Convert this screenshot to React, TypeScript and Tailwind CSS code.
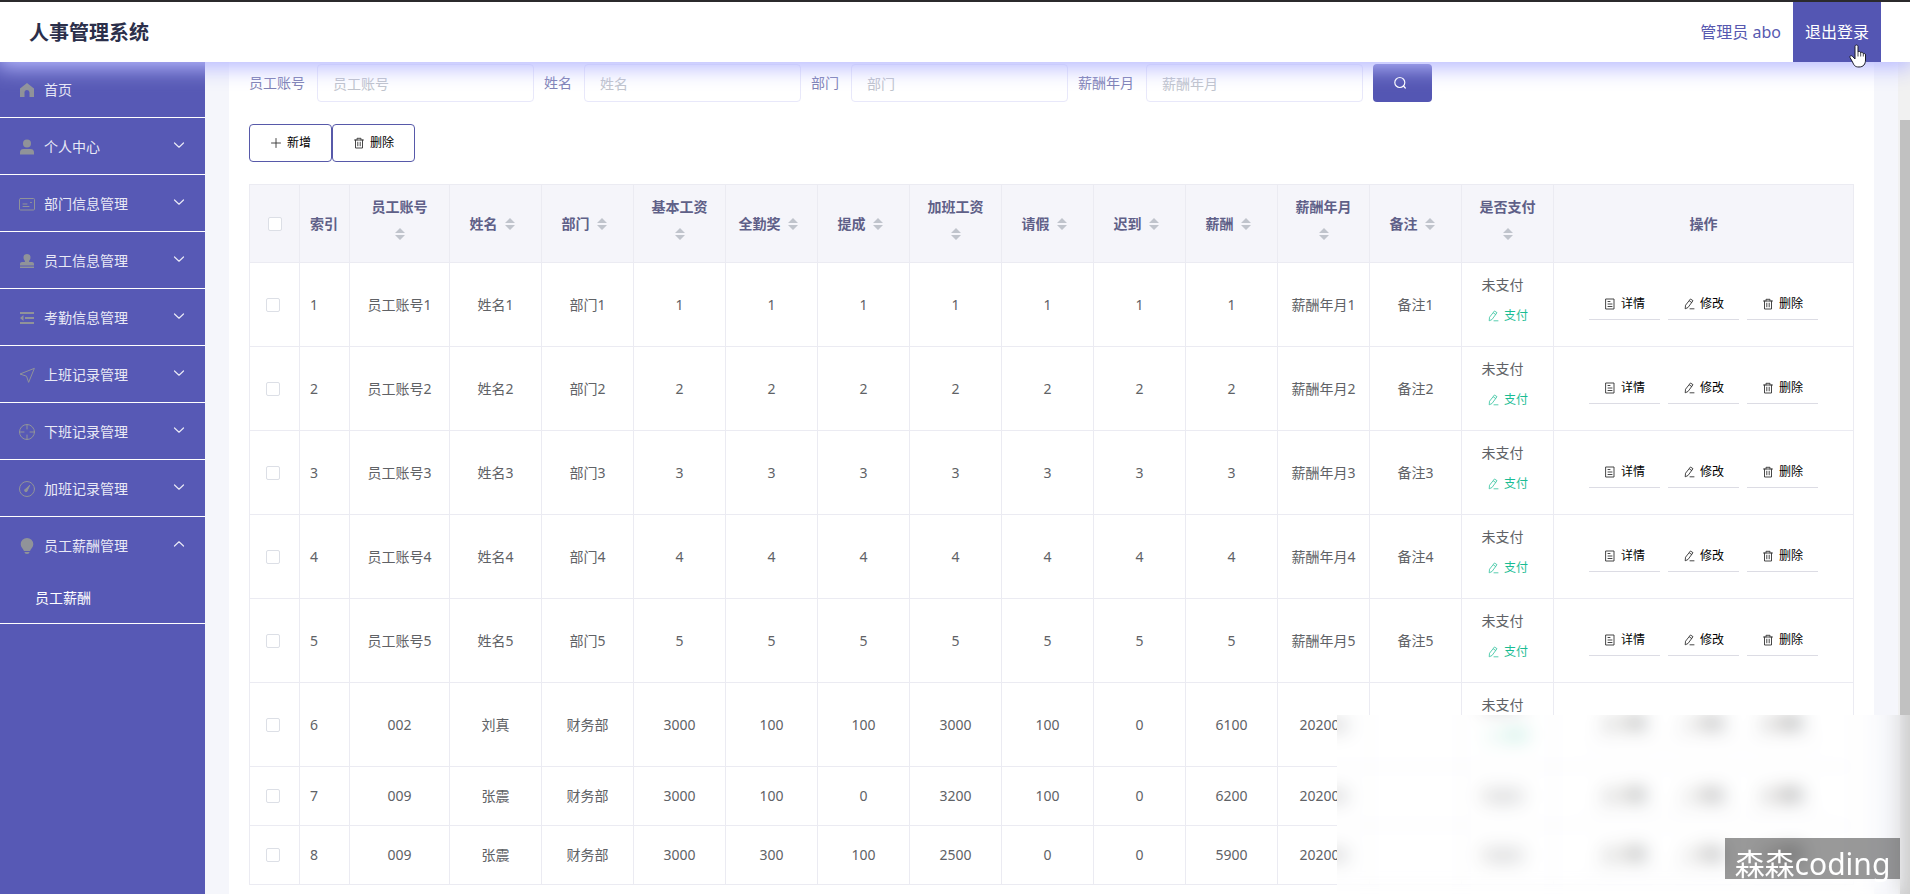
import React from "react";

type Row = { cells: string[]; paid: boolean };

const COLUMNS = ["员工账号", "姓名", "部门", "基本工资", "全勤奖", "提成", "加班工资", "请假", "迟到", "薪酬", "薪酬年月", "备注"];

const sample = (n: number): Row => ({
  cells: [`员工账号${n}`, `姓名${n}`, `部门${n}`, ...Array(7).fill(String(n)), `薪酬年月${n}`, `备注${n}`],
  paid: false,
});

const ROWS: Row[] = [
  sample(1),
  sample(2),
  sample(3),
  sample(4),
  sample(5),
  { cells: ["002", "刘真", "财务部", "3000", "100", "100", "3000", "100", "0", "6100", "202006", ""], paid: false },
  { cells: ["009", "张震", "财务部", "3000", "100", "0", "3200", "100", "0", "6200", "202006", ""], paid: true },
  { cells: ["009", "张震", "财务部", "3000", "300", "100", "2500", "0", "0", "5900", "202006", ""], paid: true },
];

const line = { fill: "none", stroke: "currentColor", strokeLinecap: "round", strokeLinejoin: "round" } as const;

const MENU: { label: string; icon: React.ReactNode; open?: boolean; leaf?: boolean }[] = [
  { label: "首页", leaf: true, icon: <path fill="currentColor" d="M9 2 2 7.500V16h4.500v-4.500a2.500 2.500 0 0 1 5 0V16H16V7.500z" /> },
  {
    label: "个人中心",
    icon: (
      <g fill="currentColor">
        <circle cx="9" cy="5.500" r="4" />
        <path d="M2 16.500V14.500c0-2.500 1.500-3.500 3.500-3.500h7c2 0 3.500 1 3.500 3.500v2z" />
      </g>
    ),
  },
  {
    label: "部门信息管理",
    icon: (
      <g {...line}>
        <rect x="1.500" y="3.500" width="15" height="11.500" rx="1" />
        <path d="M5 9h4M5 11.500h6M12.500 7.500h1" />
      </g>
    ),
  },
  {
    label: "员工信息管理",
    icon: (
      <g fill="currentColor">
        <path d="M9 2a3.700 3.700 0 0 1 3.500 4c0 1.500-1.500 2.200-1.500 4h3c1.200 0 2 .8 2 2v1.500H2V12c0-1.200.8-2 2-2h3c0-1.800-1.500-2.500-1.500-4A3.700 3.700 0 0 1 9 2z" />
        <path d="M2 14.500h14V16H2z" />
      </g>
    ),
  },
  {
    label: "考勤信息管理",
    icon: (
      <g fill="currentColor">
        <path d="M2 3h14v2H2zM7 8h9v2H7zM2 13h14v2H2zM5.500 6v6L2 9z" />
      </g>
    ),
  },
  { label: "上班记录管理", icon: <path {...line} d="M16 2.500 2 8l6.500 2.200L10.500 16z" /> },
  {
    label: "下班记录管理",
    icon: (
      <g {...line}>
        <circle cx="9" cy="9" r="7.500" />
        <path d="M9 1.500V6M9 12v4.500M1.500 9H6M12 9h4.500" />
      </g>
    ),
  },
  {
    label: "加班记录管理",
    icon: (
      <g {...line}>
        <circle cx="9" cy="9" r="7.500" />
        <path fill="currentColor" d="M11.500 5.500 7.800 9a1.400 1.400 0 1 0 1.600 1.500z" />
      </g>
    ),
  },
  {
    label: "员工薪酬管理",
    open: true,
    icon: (
      <g fill="currentColor">
        <path d="M9 1a6.300 6.300 0 0 1 6.300 6.300c0 3-2.300 4.200-3.300 6.700H6c-1-2.500-3.300-3.700-3.300-6.700A6.300 6.300 0 0 1 9 1z" />
        <path d="M6.500 15h5c0 1.200-1 2-2.500 2s-2.500-.8-2.500-2z" />
      </g>
    ),
  },
];

function Chevron({ up }: { up?: boolean }) {
  return (
    <svg className="mb-1 h-3 w-3" viewBox="0 0 12 12" {...line} strokeWidth="1.2" aria-hidden="true">
      <path d={up ? "M1.500 8 6 3.800 10.500 8" : "M1.500 4 6 8.200 10.500 4"} />
    </svg>
  );
}

function SmallIcon({ d }: { d: string }) {
  return (
    <svg className="h-3 w-3 shrink-0 opacity-80" viewBox="0 0 12 12" {...line} strokeWidth="0.9" aria-hidden="true">
      <path d={d} />
    </svg>
  );
}

const PLUS = "M6 1.500v9M1.500 6h9";
const TRASH = "M1.500 3h9M4 3V1.300h4V3M2.500 3v8h7V3M4.800 5.200v3.600M7.200 5.200v3.600";
const DOC = "M2 1h8v10H2zM4 3.500h2M4 6h4M4 8.500h4";
const PEN = "M7.800 1.200 10 2.700 5 9.500l-2.800 1.300.3-3.200zM6.500 3l2.200 1.500M7 10.800h4";

function SortIcon() {
  return (
    <span className="flex h-[34px] w-6 items-center justify-center">
      <svg className="h-3 w-[10px] text-[#c0c4cc]" viewBox="0 0 10 12" fill="currentColor" aria-hidden="true">
        <path d="M5 0 10 5H0zM0 7h10L5 12z" />
      </svg>
    </span>
  );
}

function Check({ label }: { label: string }) {
  return (
    <input
      type="checkbox"
      aria-label={label}
      className="block h-[14px] w-[14px] appearance-none rounded-[2px] border border-[#dcdfe6] bg-white checked:bg-[#5759b5]"
    />
  );
}

function Action({ d, text }: { d: string; text: string }) {
  return (
    <button className="flex h-[30px] items-center gap-[5px] border-b border-[#dcdce4] px-[15px] text-xs text-black">
      <SmallIcon d={d} />
      {text}
    </button>
  );
}

function Field({ id, label }: { id: string; label: string }) {
  return (
    <div className="flex items-center gap-3">
      <label htmlFor={id} className="text-sm text-[#7e80b4]">
        {label}
      </label>
      <input
        id={id}
        placeholder={label}
        className="h-[38px] w-[217px] rounded border border-[#e8e8fa] px-[15px] text-sm outline-none placeholder:text-[#c0c4cc]"
      />
    </div>
  );
}

export default function App() {
  return (
    <div className="relative flex h-screen flex-col overflow-hidden bg-[#f5f6fb] font-['Noto_Sans','Noto_Sans_CJK_SC',sans-serif]">
      <header className="relative z-10 flex h-[62px] shrink-0 items-stretch border-t-2 border-[#2b2a2c] bg-white pr-[29px] pl-[29px] shadow-[0_3px_20px_3px_#b8baff]">
        <h1 className="flex flex-1 items-center pt-[2px] text-xl font-bold text-[#2b2f4a]">人事管理系统</h1>
        <span className="flex items-center px-3 text-base text-[#5759b0]">管理员 abo</span>
        <button className="relative bg-[#5456b3] px-3 text-base text-white">
          退出登录
          <svg className="absolute top-[42px] left-[56px] h-6 w-[18px]" viewBox="0 0 18 24" aria-hidden="true">
            <path
              fill="#fff"
              stroke="#1a1a2a"
              strokeLinejoin="round"
              d="M6 2.500C6 .5 9 .5 9 2.500V8c.5-1 2.600-.8 2.700.8.6-.9 2.500-.6 2.600 1 .7-.8 2.200-.4 2.200 1.200V16c0 4-2 7-6.500 7S5 21 3.500 18L1 13.500c-.6-1.400 1-2.500 2.300-1.300L6 15z"
            />
            <path stroke="#1a1a2a" strokeWidth="0.8" d="M9 8v4.500M11.700 9v3.500M14.300 10v2.500" />
          </svg>
        </button>
      </header>

      <div className="flex min-h-0 flex-1">
        <nav className="w-[205px] shrink-0 bg-[#5759b5] text-sm text-[#e9e9f6]">
          <ul>
            {MENU.map((m) => (
              <li key={m.label} className="border-b border-white">
                <a href="#" className={`flex items-center pr-5 pl-[18px] ${m.leaf ? "h-[55px]" : "h-[56px] pt-[2px]"}`}>
                  <svg className="h-[18px] w-[18px] text-[#909399]" viewBox="0 0 18 18" aria-hidden="true">
                    {m.icon}
                  </svg>
                  <span className="flex-1 pl-2">{m.label}</span>
                  {!m.leaf && <Chevron up={m.open} />}
                </a>
                {m.open && (
                  <a href="#" className="flex h-[50px] items-center pl-[35px] text-white">
                    员工薪酬
                  </a>
                )}
              </li>
            ))}
          </ul>
        </nav>

        <main className="min-w-0 flex-1 px-6">
          <div className="h-full bg-white px-5 pt-[2px]">
            <form className="flex items-center gap-[10px]" onSubmit={(e) => e.preventDefault()}>
              <Field id="account" label="员工账号" />
              <Field id="name" label="姓名" />
              <Field id="department" label="部门" />
              <Field id="month" label="薪酬年月" />
              <button
                aria-label="搜索"
                className="flex h-[38px] w-[59px] items-center rounded bg-[#5456b3] pl-5 text-white"
              >
                <svg className="h-[14px] w-[14px]" viewBox="0 0 14 14" {...line} strokeWidth="1.2" aria-hidden="true">
                  <circle cx="6.800" cy="6.500" r="5" />
                  <path d="m10.500 10 1.800 2" />
                </svg>
              </button>
            </form>

            <div className="flex pt-[22px] pb-[22px] text-xs text-black">
              <button className="flex h-[38px] items-center gap-[5px] rounded border border-[#5759a9] px-5">
                <SmallIcon d={PLUS} />
                新增
              </button>
              <button className="flex h-[38px] items-center gap-[5px] rounded border border-[#5759a9] px-5">
                <SmallIcon d={TRASH} />
                删除
              </button>
            </div>

            <table className="w-full table-fixed border-collapse text-sm text-[#606266] [&_td]:border [&_td]:border-[#ebebf2] [&_th]:border [&_th]:border-[#ebebf2]">
              <colgroup>
                <col className="w-[50px]" />
                <col className="w-[50px]" />
                <col className="w-[100px]" />
                {COLUMNS.map((c) => (
                  <col key={c} />
                ))}
                <col className="w-[300px]" />
              </colgroup>
              <thead>
                <tr className="h-[78px] bg-[#f5f5fa] text-[#5f6088]">
                  <th className="pl-[18px]">
                    <Check label="全选" />
                  </th>
                  <th className="px-[10px] text-left font-bold">索引</th>
                  {[...COLUMNS, "是否支付"].map((c) => (
                    <th key={c} className="p-0 font-bold">
                      <div className="flex flex-wrap items-center justify-center px-[10px]">
                        <span className="leading-5">{c}</span>
                        <SortIcon />
                      </div>
                    </th>
                  ))}
                  <th className="font-bold">操作</th>
                </tr>
              </thead>
              <tbody>
                {ROWS.map((r, i) => (
                  <tr key={i} className={r.paid ? "h-[59px]" : "h-[84px]"}>
                    <td className="pl-4">
                      <Check label={`选择第${i + 1}行`} />
                    </td>
                    <td className="px-[10px]">{i + 1}</td>
                    {r.cells.map((c, k) => (
                      <td key={k} className="text-center whitespace-nowrap">
                        {c}
                      </td>
                    ))}
                    <td className="p-0 text-center">
                      <div className="pr-[10px]">{r.paid ? "已支付" : "未支付"}</div>
                      {!r.paid && (
                        <button className="mx-auto mt-[11px] mb-2 flex h-5 items-center gap-[5px] text-xs text-[#1abc93]">
                          <SmallIcon d={PEN} />
                          支付
                        </button>
                      )}
                    </td>
                    <td className="p-0">
                      <div className="flex justify-center gap-2">
                        <Action d={DOC} text="详情" />
                        <Action d={PEN} text="修改" />
                        <Action d={TRASH} text="删除" />
                      </div>
                    </td>
                  </tr>
                ))}
              </tbody>
            </table>
          </div>
        </main>

        <div className="w-3 shrink-0 bg-[#f1f1f1] pt-[58px] pl-[2px]">
          <div className="h-full bg-[#c1c1c1]" />
        </div>
      </div>

      <div className="absolute right-0 bottom-0 h-[219px] w-[613px] bg-white/20 backdrop-blur-[9px] [mask-composite:intersect] [mask-image:linear-gradient(to_bottom,transparent_40px,black_40px),linear-gradient(to_right,transparent_40px,black_40px)]" />
      <div className="absolute right-[10px] bottom-[15px] flex h-[41px] w-[175px] items-center justify-center bg-black/40 pt-[10px] text-[30px] leading-none text-white">
        森森coding
      </div>
    </div>
  );
}
